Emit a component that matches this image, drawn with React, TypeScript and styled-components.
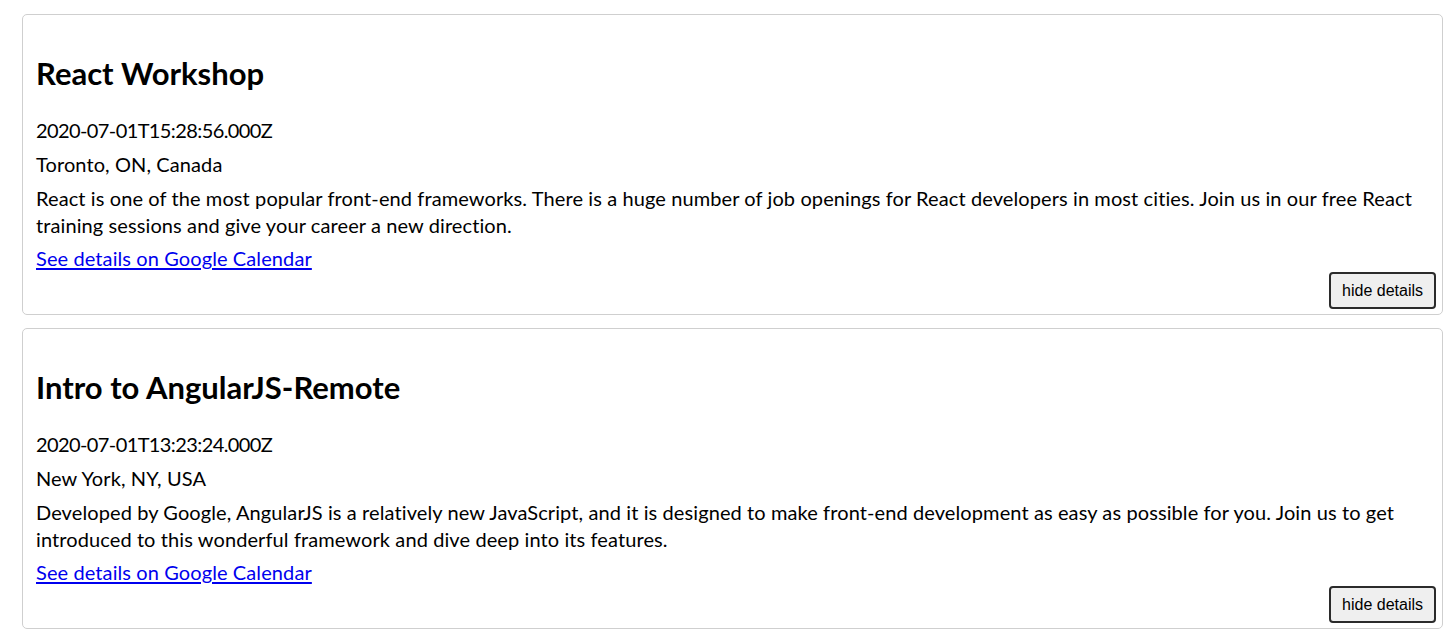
import React from "react";
import styled, { createGlobalStyle } from "styled-components";

const GlobalStyle = createGlobalStyle`
  html, body { margin: 0; padding: 0; background: #ffffff; }
  body {
    font-family: Lato, "Open Sans", "Noto Sans", sans-serif;
    color: #000000;
  }
`;

const Page = styled.div`
  display: flex;
  flex-direction: column;
  gap: 13px;
  padding: 14px 3px 0 22px;
`;

const Card = styled.article`
  display: flex;
  flex-direction: column;
  border: 1px solid #cfcfcf;
  border-radius: 5px;
  padding: 0 6px 5px 13px;
  font-size: 20px;
  line-height: 27px;
  letter-spacing: 0.1px;
`;

const Title = styled.h2`
  margin: 40px 0 26px 0;
  font-size: 31px;
  line-height: 36px;
  font-weight: 700;
  letter-spacing: 0;
`;

const Text = styled.p<{ $tight?: boolean; $last?: boolean }>`
  margin: 0 0 ${(p) => (p.$last ? "6px" : "7px")} 0;
  letter-spacing: ${(p) => (p.$tight ? "-0.6px" : "0.1px")};
`;

const CalendarLink = styled.a`
  align-self: flex-start;
  color: #0000ee;
  text-decoration: underline;
  text-underline-offset: 2px;
`;

const Actions = styled.div`
  display: flex;
  justify-content: flex-end;
`;

const DetailsButton = styled.button`
  font-family: "Liberation Sans", Arial, sans-serif;
  font-size: 16px;
  line-height: 19px;
  letter-spacing: 0;
  color: #000000;
  background: #efefef;
  border: 2px solid #2b2b2b;
  border-radius: 4px;
  padding: 7px 11px;
  cursor: pointer;
`;

type EventItem = {
  title: string;
  date: string;
  location: string;
  description: string;
};

const events: EventItem[] = [
  {
    title: "React Workshop",
    date: "2020-07-01T15:28:56.000Z",
    location: "Toronto, ON, Canada",
    description:
      "React is one of the most popular front-end frameworks. There is a huge number of job openings for React developers in most cities. Join us in our free React training sessions and give your career a new direction.",
  },
  {
    title: "Intro to AngularJS-Remote",
    date: "2020-07-01T13:23:24.000Z",
    location: "New York, NY, USA",
    description:
      "Developed by Google, AngularJS is a relatively new JavaScript, and it is designed to make front-end development as easy as possible for you. Join us to get introduced to this wonderful framework and dive deep into its features.",
  },
];

function EventCard({ event }: { event: EventItem }) {
  return (
    <Card>
      <Title>{event.title}</Title>
      <Text $tight>{event.date}</Text>
      <Text>{event.location}</Text>
      <Text $last>{event.description}</Text>
      <CalendarLink href="#">See details on Google Calendar</CalendarLink>
      <Actions>
        <DetailsButton type="button">hide details</DetailsButton>
      </Actions>
    </Card>
  );
}

export default function App() {
  return (
    <>
      <GlobalStyle />
      <Page>
        {events.map((e) => (
          <EventCard key={e.title} event={e} />
        ))}
      </Page>
    </>
  );
}
